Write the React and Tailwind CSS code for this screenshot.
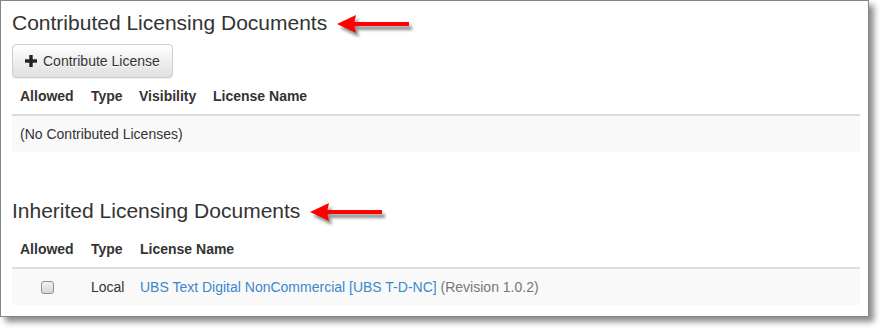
import React from 'react'

function RedArrow() {
  return (
    <svg width="84" height="32" viewBox="0 0 84 32" className="ml-[9px] shrink-0 overflow-visible">
      <defs>
        <filter id="arrowShadow" x="-20%" y="-50%" width="140%" height="200%">
          <feGaussianBlur stdDeviation="1.6" />
        </filter>
      </defs>
      <g transform="translate(3 4)" fill="#6b6b6b" opacity="0.75" filter="url(#arrowShadow)">
        <path d="M1 13 L20 4 L18 13 L20 22 Z" />
        <rect x="17" y="11" width="56" height="4" />
      </g>
      <g fill="#ff0000">
        <path d="M1 13 L20 4 L18 13 L20 22 Z" />
        <rect x="17" y="11" width="56" height="4" />
      </g>
    </svg>
  )
}

function SectionTitle({ children, className = '' }) {
  return (
    <div className={`flex items-start h-[23px] ${className}`}>
      <h3 className="text-[21px] leading-[23px] text-[#333]">{children}</h3>
      <RedArrow />
    </div>
  )
}

function PlusIcon() {
  return (
    <svg width="12" height="12" viewBox="0 0 12 12" className="mr-[6px]">
      <rect x="4.3" y="0" width="3.4" height="12" fill="#222" />
      <rect x="0" y="4.3" width="12" height="3.4" fill="#222" />
    </svg>
  )
}

const th = 'px-2 py-2 text-left font-bold leading-5 border-b-2 border-[#ddd] whitespace-nowrap'
const td = 'px-2 py-2 leading-5 whitespace-nowrap'

export default function App() {
  return (
    <div className="bg-white w-[885px] h-[334px]" style={{ fontFamily: '"Liberation Sans", Arial, sans-serif' }}>
      <div className="w-[869px] h-[317px] border border-[#858585] bg-white pl-[11px] pr-[8px] pt-[10px] shadow-[5px_5px_6px_rgba(0,0,0,0.45)] text-[14px] text-[#333]">
        <SectionTitle>Contributed Licensing Documents</SectionTitle>

        <button className="mt-[10px] flex items-center h-[34px] px-3 rounded-[4px] border border-[#ccc] bg-gradient-to-b from-white to-[#e0e0e0] shadow-[0_1px_1px_rgba(0,0,0,0.075)] text-[14px] leading-5 text-[#333] [text-shadow:0_1px_0_#fff]">
          <PlusIcon />
          Contribute License
        </button>

        <table className="w-full border-collapse table-fixed">
          <thead>
            <tr>
              <th className={`${th} w-[71px]`}>Allowed</th>
              <th className={`${th} w-[48px]`}>Type</th>
              <th className={`${th} w-[74px]`}>Visibility</th>
              <th className={th}>License Name</th>
            </tr>
          </thead>
          <tbody>
            <tr className="bg-[#f9f9f9]">
              <td className={td} colSpan={4}>(No Contributed Licenses)</td>
            </tr>
          </tbody>
        </table>

        <SectionTitle className="mt-[47px]">Inherited Licensing Documents</SectionTitle>

        <table className="w-full border-collapse table-fixed mt-[9px]">
          <thead>
            <tr>
              <th className={`${th} w-[71px]`}>Allowed</th>
              <th className={`${th} w-[49px]`}>Type</th>
              <th className={th}>License Name</th>
            </tr>
          </thead>
          <tbody>
            <tr className="bg-[#f9f9f9]">
              <td className={`${td} text-center`}>
                <input
                  type="checkbox"
                  className="appearance-none block mx-auto mt-[1px] w-[13px] h-[13px] rounded-[3px] border border-[#8e8f8f] bg-gradient-to-b from-[#f2f2f2] to-[#d6d6d6]"
                />
              </td>
              <td className={td}>Local</td>
              <td className={td}>
                <a href="#" className="text-[#3d87cb]">UBS Text Digital NonCommercial [UBS T-D-NC]</a>
                <span className="text-[#777]"> (Revision 1.0.2)</span>
              </td>
            </tr>
          </tbody>
        </table>
      </div>
    </div>
  )
}
